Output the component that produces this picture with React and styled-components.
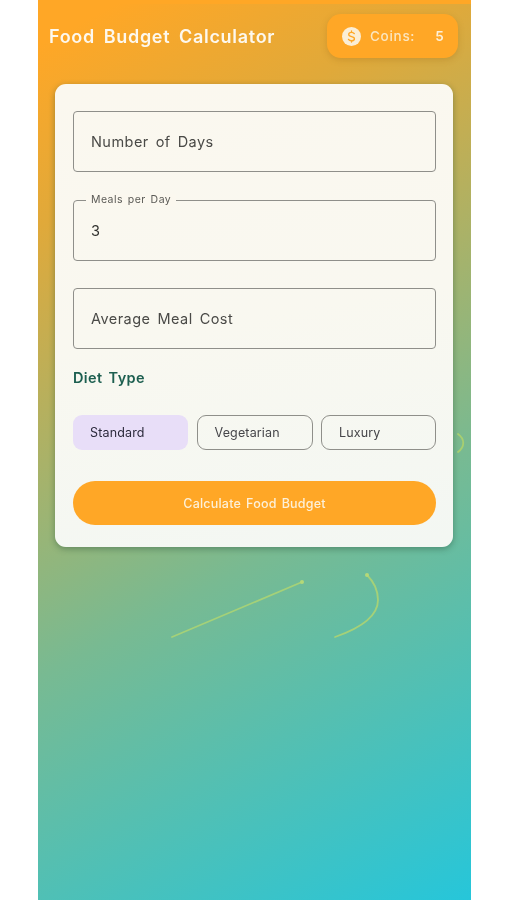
import React from "react";
import styled, { createGlobalStyle } from "styled-components";

const GlobalStyle = createGlobalStyle`
  html, body {
    margin: 0;
    padding: 0;
    background: #fff;
  }
  * {
    box-sizing: border-box;
  }
`;

const Page = styled.div`
  width: 506px;
  height: 900px;
  padding-left: 38px;
  background: #fff;
  overflow: hidden;
`;

const Screen = styled.div`
  position: relative;
  width: 433px;
  height: 900px;
  background: linear-gradient(152deg, #ffa726 4%, #e0a93a 20%, #78ba92 60%, #26c6da 100%);
  font-family: Inter, "Liberation Sans", sans-serif;
  filter: blur(0.6px);
  overflow: hidden;
`;

const TopStrip = styled.div`
  height: 4px;
  background: #ffa726;
`;

const Header = styled.header`
  display: flex;
  align-items: center;
  justify-content: space-between;
  height: 44px;
  margin-top: 10px;
  padding: 0 13px 0 11px;
`;

const Title = styled.h1`
  margin: 0;
  color: #fdf8ee;
  font-size: 18px;
  font-weight: 600;
  letter-spacing: 0.7px;
  word-spacing: 3.5px;
`;

const CoinPill = styled.div`
  display: flex;
  align-items: center;
  width: 131px;
  height: 44px;
  padding-left: 15px;
  border-radius: 14px;
  background: #ffa726;
  box-shadow: 0 2px 6px rgba(150, 100, 20, 0.28);
  color: #fbe6c0;
  font-size: 13.5px;
  font-weight: 500;
  letter-spacing: 0.7px;
`;

const CoinIcon = styled.svg`
  width: 19px;
  height: 19px;
  margin-right: 9px;
  flex: none;
`;

const CoinCount = styled.span`
  margin-left: 20px;
  color: #fdf0d8;
  font-weight: 600;
`;

const Card = styled.main`
  display: flex;
  flex-direction: column;
  width: 398px;
  height: 463px;
  margin: 26px 0 0 17px;
  padding: 27px 17px 0 18px;
  border-radius: 11px;
  background: linear-gradient(170deg, #fbf8ef 0%, #f9f8f0 50%, #f3f7f3 100%);
  box-shadow: 0 2px 6px rgba(30, 70, 50, 0.4);
`;

const Field = styled.div`
  position: relative;
  display: flex;
  align-items: center;
  height: 61px;
  margin-bottom: 27.5px;
  padding-left: 17px;
  border: 1.5px solid #8f8f8a;
  border-radius: 4px;
  color: ${(props) => (props.filled ? "#2f2f2c" : "#4a4a47")};
  font-size: 14.5px;
  letter-spacing: 0.45px;
  word-spacing: 2.5px;
`;

const FloatingLabel = styled.span`
  position: absolute;
  top: -7px;
  left: 12px;
  padding: 0 5px;
  background: #fbf8ef;
  color: #5a5a56;
  font-size: 10.5px;
  line-height: 12px;
  letter-spacing: 0.45px;
  word-spacing: 1.5px;
`;

const SectionLabel = styled.div`
  margin-top: -7.5px;
  color: #1d5f50;
  font-size: 14.5px;
  font-weight: 600;
  line-height: 18px;
  letter-spacing: 0.4px;
  word-spacing: 2px;
`;

const ChipRow = styled.div`
  display: grid;
  grid-template-columns: 115px 116px 115px;
  column-gap: 8.5px;
  margin-top: 28px;
`;

const Chip = styled.div`
  display: flex;
  align-items: center;
  height: 35px;
  padding-left: 17px;
  border: ${(props) => (props.selected ? "none" : "1.5px solid #8f8f8a")};
  border-radius: 9px;
  background: ${(props) => (props.selected ? "#e8def8" : "transparent")};
  color: ${(props) => (props.selected ? "#2c2a3c" : "#46464a")};
  font-size: 12.5px;
  letter-spacing: 0.15px;
`;

const CalcButton = styled.button`
  display: block;
  width: 363px;
  height: 44px;
  margin-top: 31px;
  border: none;
  border-radius: 22px;
  background: #ffa726;
  color: #fdf0d8;
  font-family: inherit;
  font-size: 12.5px;
  font-weight: 500;
  letter-spacing: 0.2px;
  word-spacing: 1.5px;
`;

const Doodles = styled.svg`
  position: absolute;
  top: 0;
  left: 0;
  width: 433px;
  height: 900px;
  pointer-events: none;
`;

function App() {
  return (
    <>
      <GlobalStyle />
      <Page>
        <Screen>
          <TopStrip />
          <Doodles viewBox="0 0 433 900" fill="none">
            <path d="M134 637 L264 582" stroke="#a5d178" strokeWidth="1.8" strokeLinecap="round" />
            <circle cx="264" cy="582" r="2" fill="#b5d878" />
            <path d="M297 637 C320 629 340 618 340 600 C340 590 335 581 329 575" stroke="#a5d178" strokeWidth="1.8" strokeLinecap="round" />
            <circle cx="329" cy="575" r="2" fill="#b5d878" />
            <path d="M420 434 C427 439 427 447 420 452" stroke="#a8cf70" strokeWidth="1.8" strokeLinecap="round" />
          </Doodles>
          <Header>
            <Title>Food Budget Calculator</Title>
            <CoinPill>
              <CoinIcon viewBox="0 0 24 24">
                <circle cx="12" cy="12" r="12" fill="#fbeed6" />
                <path
                  d="M15.5 8.3C14.8 7.2 13.5 6.7 12 6.7c-2 0-3.5 1-3.5 2.7 0 3.6 7.2 1.8 7.2 5.3 0 1.7-1.6 2.7-3.7 2.7-1.7 0-3.1-.6-3.8-1.8M12 5v1.7M12 17.4v1.7"
                  stroke="#ffa726"
                  strokeWidth="1.7"
                  fill="none"
                  strokeLinecap="round"
                />
              </CoinIcon>
              Coins:
              <CoinCount>5</CoinCount>
            </CoinPill>
          </Header>
          <Card>
            <Field>Number of Days</Field>
            <Field filled>
              <FloatingLabel>Meals per Day</FloatingLabel>3
            </Field>
            <Field>Average Meal Cost</Field>
            <SectionLabel>Diet Type</SectionLabel>
            <ChipRow>
              <Chip selected>Standard</Chip>
              <Chip>Vegetarian</Chip>
              <Chip>Luxury</Chip>
            </ChipRow>
            <CalcButton>Calculate Food Budget</CalcButton>
          </Card>
        </Screen>
      </Page>
    </>
  );
}

export default App;
